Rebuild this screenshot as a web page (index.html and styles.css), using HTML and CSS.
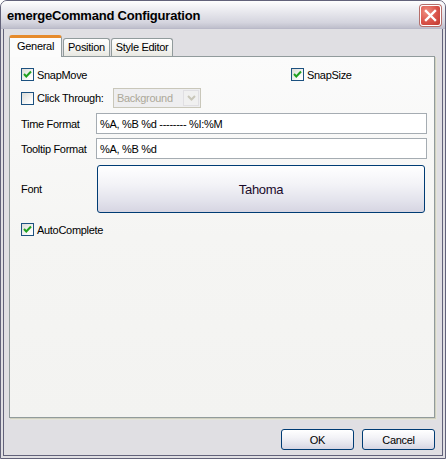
FILE: index.html
```html
<!DOCTYPE html>
<html>
<head>
<meta charset="utf-8">
<link rel="stylesheet" href="styles.css">
</head>
<body>
<div class="window">
  <div class="titlebar">
    <span class="title">emergeCommand Configuration</span>
    <div class="close">
      <svg width="13" height="13" viewBox="0 0 13 13"><path d="M2 2 L11 11 M11 2 L2 11" stroke="#fff" stroke-width="2.4" stroke-linecap="square"/></svg>
    </div>
  </div>
  <div class="client">
    <div class="tabs">
      <div class="tab selected">General</div>
      <div class="tab">Position</div>
      <div class="tab">Style Editor</div>
    </div>
    <div class="panel">
      <div class="row row-snap">
        <label class="check snapmove"><span class="box checked"><svg width="11" height="11" viewBox="0 0 11 11"><path d="M2 5 L4.3 7.5 L9 2.5" fill="none" stroke="#21a121" stroke-width="2"/></svg></span>SnapMove</label>
        <label class="check"><span class="box checked"><svg width="11" height="11" viewBox="0 0 11 11"><path d="M2 5 L4.3 7.5 L9 2.5" fill="none" stroke="#21a121" stroke-width="2"/></svg></span>SnapSize</label>
      </div>
      <div class="row row-click">
        <label class="check clickthru"><span class="box"></span>Click Through:</label>
        <div class="combo">
          <span class="combo-text">Background</span>
          <span class="combo-btn"><svg width="9" height="6" viewBox="0 0 9 6"><path d="M1 1 L4.5 4.5 L8 1" fill="none" stroke="#c9c7ba" stroke-width="2"/></svg></span>
        </div>
      </div>
      <div class="row field">
        <span class="label">Time Format</span>
        <div class="input">%A, %B %d -------- %I:%M</div>
      </div>
      <div class="row field field2">
        <span class="label">Tooltip Format</span>
        <div class="input">%A, %B %d</div>
      </div>
      <div class="row fontrow">
        <span class="label">Font</span>
        <div class="btn fontbtn">Tahoma</div>
      </div>
      <div class="row row-auto">
        <label class="check"><span class="box checked"><svg width="11" height="11" viewBox="0 0 11 11"><path d="M2 5 L4.3 7.5 L9 2.5" fill="none" stroke="#21a121" stroke-width="2"/></svg></span>AutoComplete</label>
      </div>
    </div>
    <div class="buttons">
      <div class="btn dlg">OK</div>
      <div class="btn dlg">Cancel</div>
    </div>
  </div>
</div>
</body>
</html>
```
FILE: styles.css
```css
* { box-sizing: border-box; }
html, body { margin: 0; padding: 0; background: #fff; }
body { font-family: "Liberation Sans", Arial, sans-serif; font-size: 11px; color: #000; letter-spacing: -0.3px; }

.window {
  width: 446px;
  height: 459px;
  display: flex;
  flex-direction: column;
  border: 1px solid #62627a;
  border-radius: 7px 7px 0 0;
  background: #e0dfe3;
  overflow: hidden;
}

.titlebar {
  height: 28px;
  flex: none;
  display: flex;
  align-items: center;
  justify-content: space-between;
  padding: 0 4px 0 6px;
  background: linear-gradient(#fefefe 0%, #f0f0f4 25%, #e1e1e8 55%, #d4d4de 80%, #bfbfcc 100%);
  border-bottom: 1px solid #b9b9c8;
}
.title {
  font-family: "Liberation Sans", Arial, sans-serif;
  font-weight: bold;
  font-size: 13px;
  color: #000;
  padding-top: 2px;
  letter-spacing: -0.2px;
}
.close {
  width: 21px;
  height: 21px;
  margin-top: 2px;
  border: 1px solid #fff;
  border-radius: 3px;
  background: radial-gradient(circle at 30% 30%, #f08f80, #d9534a 55%, #c0392f);
  display: flex;
  align-items: center;
  justify-content: center;
  box-shadow: 0 0 0 1px #b56e6a;
}

.client {
  flex: 1;
  display: flex;
  flex-direction: column;
  padding: 6px 8px 0 6px;
  border-left: 2px solid #e0dfe3;
  border-right: 2px solid #e0dfe3;
  border-bottom: 2px solid #e0dfe3;
  box-shadow: inset 1px 0 0 #62627a, inset -1px 0 0 #62627a, inset 0 -1px 0 #62627a;
}

.tabs {
  display: flex;
  align-items: flex-end;
  height: 21px;
  flex: none;
  position: relative;
  z-index: 2;
}
.tab {
  height: 18px;
  padding: 0 4px;
  margin-right: 1px;
  border: 1px solid #919b9c;
  border-bottom: none;
  border-radius: 3px 3px 0 0;
  background: linear-gradient(#fefefe, #f4f4f0 60%, #e8e8e2);
  display: flex;
  align-items: center;
  line-height: 1;
}
.tab.selected {
  height: 22px;
  margin-bottom: -1px;
  padding: 3px 7px 0;
  background: #fcfcfc;
  border-top: 3px solid #e68b2c;
  align-items: flex-start;
}

.panel {
  height: 362px;
  flex: none;
  border: 1px solid #919b9c;
  box-shadow: 1px 1px 0 #d0d0bf, 2px 2px 0 #e4e4dc;
  background: linear-gradient(#fbfbfb, #f5f5f3 50%, #f3f3f1);
  padding: 11px 0 0 11px;
  display: flex;
  flex-direction: column;
}

.row { display: flex; align-items: center; }
.row-snap { height: 13px; }
.check { display: flex; align-items: center; white-space: nowrap; }
.snapmove { width: 270px; }
.clickthru { width: 92px; }
.box {
  width: 13px;
  height: 13px;
  flex: none;
  border: 1px solid #1c5180;
  background: linear-gradient(135deg, #dcdcd7, #fdfdfd 80%);
  margin-right: 3px;
  display: flex;
  align-items: center;
  justify-content: center;
}

.row-click { margin-top: 7px; height: 20px; }
.combo {
  width: 88px;
  height: 20px;
  border: 1px solid #c9c7ba;
  background: #eeeef0;
  display: flex;
  align-items: center;
  justify-content: space-between;
  padding: 1px;
}
.combo-text { color: #aca899; padding-left: 2px; }
.combo-btn {
  width: 16px;
  height: 16px;
  border: 1px solid #e0dfe3;
  background: #f0f0f0;
  display: flex;
  align-items: center;
  justify-content: center;
}

.field { margin-top: 5px; height: 21px; }
.field2 { margin-top: 4px; }
.label { width: 75px; flex: none; }
.input {
  width: 331px;
  height: 21px;
  border: 1px solid #a5acb2;
  background: #fff;
  padding: 0 3px;
  display: flex;
  align-items: center;
}

.fontrow { margin-top: 6px; }
.btn {
  border: 1px solid #003c74;
  border-radius: 3px;
  background: linear-gradient(#ffffff, #f3f3f7 40%, #e3e3ec 75%, #d6d5e2);
  display: flex;
  align-items: center;
  justify-content: center;
}
.fontbtn {
  width: 328px;
  height: 48px;
  margin-left: 1px;
  font-size: 13px;
  color: #1a0a2a;
}

.row-auto { margin-top: 10px; }

.buttons {
  display: flex;
  justify-content: flex-end;
  gap: 8px;
  padding-top: 11px;
}
.dlg {
  width: 73px;
  height: 21px;
  font-size: 11px;
}
```
